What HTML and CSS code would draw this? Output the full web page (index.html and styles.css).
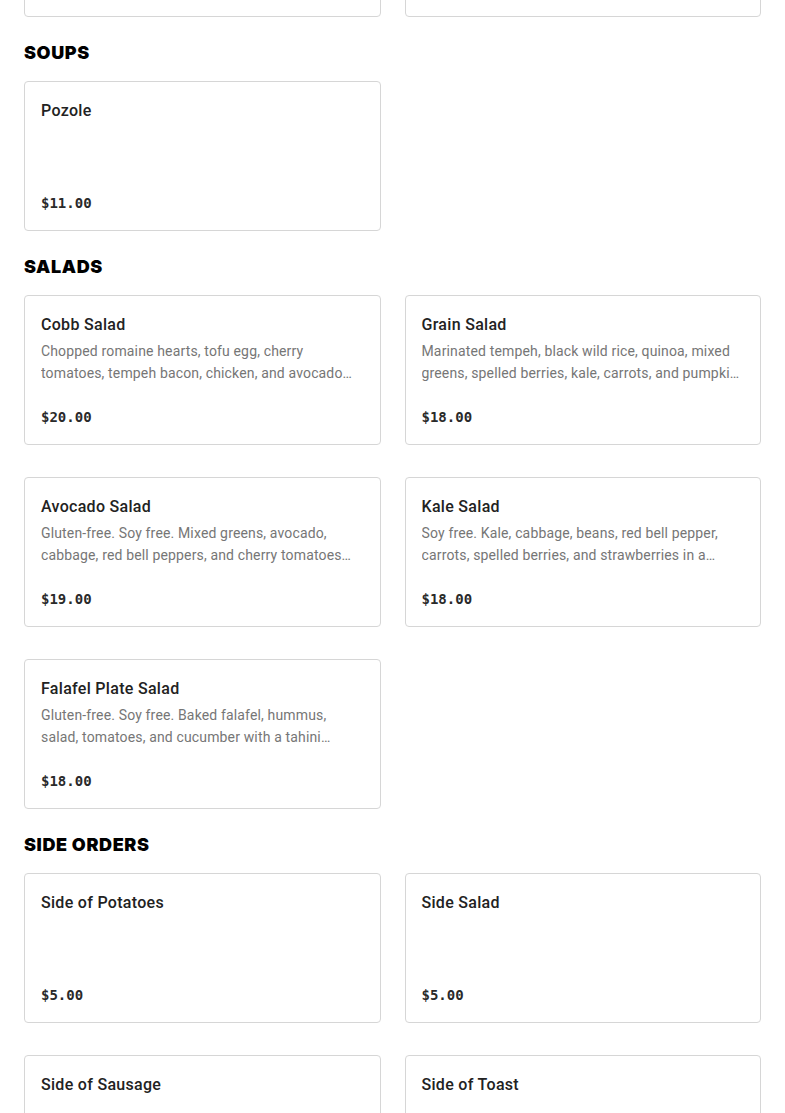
FILE: index.html
```html
<!DOCTYPE html>
<html lang="en">
<head>
<meta charset="utf-8">
<title>Menu</title>
<link rel="stylesheet" href="styles.css">
</head>
<body>
<main class="menu">
  <section class="section section-first">
    <div class="grid">
      <div class="card"><div class="title">Breakfast Burrito</div><div class="price">$16.00</div></div>
      <div class="card"><div class="title">Tofu Scramble</div><div class="price">$17.00</div></div>
    </div>
  </section>

  <section class="section">
    <h2 class="heading">SOUPS</h2>
    <div class="grid">
      <div class="card"><div class="title">Pozole</div><div class="price">$11.00</div></div>
    </div>
  </section>

  <section class="section">
    <h2 class="heading">SALADS</h2>
    <div class="grid">
      <div class="card">
        <div class="title">Cobb Salad</div>
        <div class="desc">Chopped romaine hearts, tofu egg, cherry tomatoes, tempeh bacon, chicken, and avocado with ranch dressing.</div>
        <div class="price">$20.00</div>
      </div>
      <div class="card">
        <div class="title">Grain Salad</div>
        <div class="desc">Marinated tempeh, black wild rice, quinoa, mixed greens, spelled berries, kale, carrots, and pumpkin seeds.</div>
        <div class="price">$18.00</div>
      </div>
      <div class="card">
        <div class="title">Avocado Salad</div>
        <div class="desc">Gluten-free. Soy free. Mixed greens, avocado, cabbage, red bell peppers, and cherry tomatoes with a citrus vinaigrette.</div>
        <div class="price">$19.00</div>
      </div>
      <div class="card">
        <div class="title">Kale Salad</div>
        <div class="desc">Soy free. Kale, cabbage, beans, red bell pepper, carrots, spelled berries, and strawberries in a lemon dressing.</div>
        <div class="price">$18.00</div>
      </div>
      <div class="card">
        <div class="title">Falafel Plate Salad</div>
        <div class="desc">Gluten-free. Soy free. Baked falafel, hummus, salad, tomatoes, and cucumber with a tahini dressing.</div>
        <div class="price">$18.00</div>
      </div>
    </div>
  </section>

  <section class="section">
    <h2 class="heading">SIDE ORDERS</h2>
    <div class="grid">
      <div class="card"><div class="title">Side of Potatoes</div><div class="price">$5.00</div></div>
      <div class="card"><div class="title">Side Salad</div><div class="price">$5.00</div></div>
      <div class="card"><div class="title">Side of Sausage</div><div class="price">$5.00</div></div>
      <div class="card"><div class="title">Side of Toast</div><div class="price">$4.00</div></div>
    </div>
  </section>
</main>
</body>
</html>
```

FILE: styles.css
```css
html, body {
  margin: 0;
  padding: 0;
  background: #ffffff;
}

body {
  font-family: "Roboto", "Liberation Sans", sans-serif;
  color: #1f1f1f;
  overflow: hidden;
}

.menu {
  padding: 0 24px;
  margin-top: -133px;
}

.heading {
  margin: 24px 0 16px;
  font-family: "Inter", "Liberation Sans", sans-serif;
  font-weight: 900;
  font-size: 18px;
  line-height: 24px;
  color: #000000;
  letter-spacing: 0.6px;
}

.grid {
  display: grid;
  grid-template-columns: 1fr 1fr;
  column-gap: 24px;
  row-gap: 32px;
}

.card {
  box-sizing: border-box;
  height: 150px;
  border: 1px solid #d6d6d6;
  border-radius: 4px;
  padding: 17px 16px 15px;
  display: flex;
  flex-direction: column;
  min-width: 0;
}

.title {
  font-size: 16px;
  font-weight: 500;
  line-height: 24px;
  color: #222222;
  letter-spacing: 0.3px;
}

.desc {
  margin-top: 3px;
  font-size: 14px;
  line-height: 22px;
  color: #767676;
  letter-spacing: 0.15px;
  display: -webkit-box;
  -webkit-line-clamp: 2;
  -webkit-box-orient: vertical;
  overflow: hidden;
}

.price {
  margin-top: auto;
  font-family: "DejaVu Sans Mono", "Liberation Mono", monospace;
  font-weight: 700;
  font-size: 14px;
  line-height: 24px;
  color: #2a2a2a;
}
```
